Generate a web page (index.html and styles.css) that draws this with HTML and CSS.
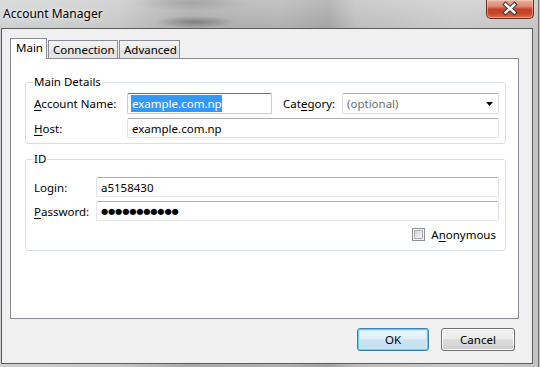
FILE: index.html
```html
<!DOCTYPE html>
<html>
<head>
<meta charset="utf-8">
<title>Account Manager</title>
<link rel="stylesheet" href="styles.css">
</head>
<body>
<div class="window">
  <div class="titlebar">
    <span class="title">Account Manager</span>
    <div class="close">
      <svg width="48" height="19" viewBox="0 0 48 19">
        <path d="M19.5 5.5 L28.5 13.5 M28.5 5.5 L19.5 13.5" stroke="#4a3b38" stroke-width="4.6" stroke-linecap="square" fill="none"/>
        <path d="M19.5 5.5 L28.5 13.5 M28.5 5.5 L19.5 13.5" stroke="#ffffff" stroke-width="2.4" stroke-linecap="square" fill="none"/>
      </svg>
    </div>
  </div>
  <div class="client">
    <div class="tabs">
      <div class="tab active">Main</div>
      <div class="tab">Connection</div>
      <div class="tab">Advanced</div>
    </div>
    <div class="panel">
      <fieldset class="group group-main">
        <legend>Main Details</legend>
        <div class="row row-first">
          <span class="lbl lbl-wide"><u>A</u>ccount Name:</span>
          <div class="textbox focused name-box"><span class="sel">example.com.np</span></div>
          <span class="lbl lbl-cat">Cat<u>e</u>gory:</span>
          <div class="textbox combo">
            <span class="placeholder">(optional)</span>
            <svg class="arrow" width="7" height="4" viewBox="0 0 7 4"><path d="M0 0 H7 L3.5 4 Z" fill="#000"/></svg>
          </div>
        </div>
        <div class="row row-second">
          <span class="lbl lbl-wide"><u>H</u>ost:</span>
          <div class="textbox grow">example.com.np</div>
        </div>
      </fieldset>
      <fieldset class="group group-id">
        <legend>ID</legend>
        <div class="row row-login">
          <span class="lbl lbl-short">Login:</span>
          <div class="textbox grow">a5158430</div>
        </div>
        <div class="row row-pass">
          <span class="lbl lbl-short"><u>P</u>assword:</span>
          <div class="textbox grow dots">●●●●●●●●●●●</div>
        </div>
        <div class="row check-row">
          <span class="checkbox"></span>
          <span class="lbl">A<u>n</u>onymous</span>
        </div>
      </fieldset>
    </div>
    <div class="buttons">
      <div class="btn default">OK</div>
      <div class="btn">Cancel</div>
    </div>
  </div>
</div>
</body>
</html>
```
FILE: styles.css
```css
html, body {
  margin: 0;
  padding: 0;
}
body {
  background: #c9c9c9;
  font-family: "Noto Sans", "Open Sans", sans-serif;
  font-size: 11.5px;
  color: #000;
  width: 540px;
  height: 367px;
  overflow: hidden;
}
.window {
  width: 539px;
  height: 367px;
  box-sizing: border-box;
  border-right: 1px solid #6e6e6e;
  display: flex;
  flex-direction: column;
  background:
    linear-gradient(to bottom, rgba(255,255,255,0.25), rgba(255,255,255,0) 30px),
    linear-gradient(to right, #cfd0d1 0%, #c6c6c6 22%, #a9a9a9 35%, #b0b0b0 52%, #a2a2a2 61%, #bcbcbc 66%, #c9c9c9 85%, #c4c4c4 100%);
}
.titlebar {
  height: 28px;
  flex: none;
  display: flex;
  justify-content: space-between;
  align-items: flex-start;
  padding: 0 4px 0 3px;
  background:
    radial-gradient(ellipse 40px 6px at 195px 22px, rgba(90,90,90,0.55), rgba(90,90,90,0)),
    radial-gradient(ellipse 60px 8px at 190px 3px, rgba(120,120,120,0.35), rgba(120,120,120,0));
}
.title {
  margin-top: 6px;
  line-height: 16px;
  font-size: 12px;
  text-shadow: 0 0 8px rgba(255,255,255,0.9), 0 0 3px rgba(255,255,255,0.7);
}
.close {
  width: 48px;
  height: 19px;
  box-sizing: border-box;
  border: 1px solid #6a2c20;
  border-top: none;
  border-radius: 0 0 5px 5px;
  background: linear-gradient(to bottom, #eab1a1 0%, #dc8a75 35%, #c64226 52%, #c9462b 75%, #d9714f 100%);
  box-shadow: inset 0 0 0 1px rgba(255,220,200,0.45);
  margin-left: auto;
}
.close svg {
  display: block;
  margin: -1px 0 0 -1px;
}
.client {
  flex: 1;
  margin: 0 5px 3px 1px;
  border: 1px solid #5c5c5c;
  background: #f0f0f0;
  display: flex;
  flex-direction: column;
}
.tabs {
  display: flex;
  align-items: flex-end;
  height: 20px;
  margin: 9px 0 0 8px;
  gap: 1px;
  position: relative;
  z-index: 1;
}
.tab {
  box-sizing: border-box;
  height: 18px;
  border: 1px solid #898c95;
  border-bottom: none;
  background: linear-gradient(to bottom, #f3f3f3 0%, #ebebeb 50%, #dfdfdf 51%, #e6e6e6 100%);
  padding: 0 3px 0 4px;
  line-height: 18px;
}
.tab:nth-child(2) { width: 70px; }
.tab:nth-child(3) { width: 61px; }
.tab.active {
  width: 37px;
  height: 21px;
  margin-bottom: -1px;
  background: #fff;
  line-height: 16px;
  padding: 1px 3px 0 5px;
}
.panel {
  box-sizing: border-box;
  height: 261px;
  margin: 0 13px 0 8px;
  border: 1px solid #898c95;
  background: #fff;
  padding: 16px 12px 0 14px;
}
.group {
  margin: 0;
  border: 1px solid #d5dfe5;
  border-radius: 3px;
  padding: 4px 6px 5px 8px;
  min-width: 0;
}
.group legend {
  padding: 0 1px;
  margin-left: -1px;
  line-height: 14px;
}
.group-id {
  margin-top: 8px;
  padding-top: 11px;
  padding-bottom: 9px;
}
.row {
  display: flex;
  align-items: center;
}
.row-first { height: 21px; }
.row-second { height: 20px; margin-top: 4px; }
.row-login { height: 20px; }
.row-pass { height: 20px; margin-top: 4px; }
.lbl {
  white-space: nowrap;
}
.lbl u { text-underline-offset: 2px; }
.lbl-wide { width: 93px; flex: none; }
.lbl-short { width: 62px; flex: none; }
.lbl-cat { width: 59px; margin-left: 11px; flex: none; }
.textbox {
  box-sizing: border-box;
  height: 100%;
  border: 1px solid #e2e3ea;
  border-top-color: #abadb3;
  border-radius: 2px;
  background: #fff;
  padding-left: 4px;
  display: flex;
  align-items: center;
  white-space: nowrap;
}
.textbox.focused {
  border-color: #b5cfe7;
  border-top-color: #3d7bad;
  padding-left: 3px;
}
.name-box {
  width: 145px;
  flex: none;
}
.sel {
  background: #3399ff;
  color: #fff;
  line-height: 17px;
  padding: 0 0 0 1px;
}
.combo {
  flex: 1;
  justify-content: space-between;
  padding-right: 5px;
  border-color: #d9dbe1;
  border-top-color: #b0b2b8;
}
.placeholder {
  color: #6d6d6d;
}
.arrow { display: block; margin-top: 1px; }
.grow { flex: 1; }
.dots {
  font-family: "DejaVu Sans", sans-serif;
  font-size: 8.2px;
  letter-spacing: -0.1px;
  padding-left: 4px;
}
.check-row {
  justify-content: flex-end;
  margin-top: 7px;
  height: 13px;
  padding-right: 3px;
  gap: 6px;
}
.checkbox {
  width: 13px;
  height: 13px;
  box-sizing: border-box;
  border: 1px solid #8f8f8f;
  background: linear-gradient(135deg, #cbcfd5 0%, #e9e9ea 60%, #f4f4f4 100%);
  box-shadow: inset 0 0 0 1px #f4f4f4, inset 0 0 0 2px #aeb3b9;
}
.buttons {
  display: flex;
  justify-content: flex-end;
  gap: 12px;
  margin: 9px 17px 0 0;
}
.btn {
  box-sizing: border-box;
  width: 74px;
  height: 23px;
  border: 1px solid #707070;
  border-radius: 3px;
  background: linear-gradient(to bottom, #f2f2f2 0%, #ebebeb 49%, #dddddd 50%, #cfcfcf 100%);
  box-shadow: inset 0 0 0 1px #fcfcfc;
  display: flex;
  align-items: center;
  justify-content: center;
}
.btn.default {
  width: 72px;
  border-color: #3c7fb1;
  box-shadow: inset 0 0 0 1px #48d6fb, inset 0 0 0 2px #c8ecf9;
  background: linear-gradient(to bottom, #eaf6fd 0%, #e0eff8 49%, #cde5f3 50%, #c2def0 100%);
}
```
